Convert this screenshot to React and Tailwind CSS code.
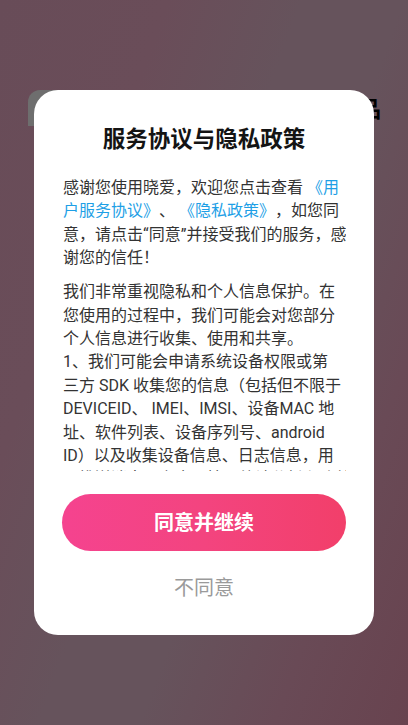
import React from "react";

const font = { fontFamily: '"Roboto", "Noto Sans CJK SC", sans-serif' };

function Line({ children }) {
  return <div className="whitespace-nowrap">{children}</div>;
}

function Link({ children }) {
  return <span className="text-[#1e9fe6]">{children}</span>;
}

export default function App() {
  return (
    <div
      className="relative h-[725px] w-full overflow-hidden bg-[linear-gradient(110deg,#684c58_0%,#6a4d59_25%,#66535c_45%,#66535c_60%,#694a56_80%,#68434f_100%)] [text-spacing-trim:space-all]"
      style={font}
    >
      {/* page underneath, dimmed */}
      <div className="absolute left-[28px] right-0 top-[90px] flex items-start justify-between">
        <div className="h-[36px] w-[40px] rounded-tl-[12px] bg-[#6e6e6e]" />
        <div className="mr-[27px] mt-[6px] text-[22px] font-bold leading-[28px] text-black">
          商品
        </div>
      </div>

      {/* modal */}
      <div className="absolute inset-0 flex items-center justify-center">
        <div className="flex h-[545px] w-[340px] flex-col rounded-[24px] bg-white px-[28px] pb-[33px] pt-[34px]">
          <div className="text-center text-[22.5px] font-semibold leading-[30px] text-[#141414]">
            服务协议与隐私政策
          </div>
          <div className="mt-[22px] h-[295px] overflow-hidden pl-[1px] text-[16px] leading-[23.4px] text-[#333333]">
            <div>
              <Line>
                感谢您使用晓爱，欢迎您点击查看 <Link>《用</Link>
              </Line>
              <Line>
                <Link>户服务协议》</Link>、 <Link>《隐私政策》</Link>，如您同
              </Line>
              <Line>意，请点击“同意”并接受我们的服务，感</Line>
              <Line>谢您的信任！</Line>
            </div>
            <div className="mt-[10.6px]">
              <Line>我们非常重视隐私和个人信息保护。在</Line>
              <Line>您使用的过程中，我们可能会对您部分</Line>
              <Line>个人信息进行收集、使用和共享。</Line>
              <Line>1、我们可能会申请系统设备权限或第</Line>
              <Line>三方 SDK 收集您的信息（包括但不限于</Line>
              <Line>DEVICEID、 IMEI、IMSI、设备MAC 地</Line>
              <Line>址、软件列表、设备序列号、android</Line>
              <Line>ID）以及收集设备信息、日志信息，用</Line>
              <Line>于推送消息、安全风控、统计分析和改善</Line>
              <Line>产品体验。</Line>
            </div>
          </div>
          <button
            type="button"
            className="mt-[23px] flex h-[57px] w-full items-center justify-center rounded-full bg-[linear-gradient(90deg,#f5438f_0%,#f3447f_50%,#f23f6a_100%)] text-[20px] font-semibold text-white"
          >
            同意并继续
          </button>
          <div className="mt-[23px] text-center text-[20px] leading-[28px] text-[#9a9a9a]">
            不同意
          </div>
        </div>
      </div>
    </div>
  );
}
